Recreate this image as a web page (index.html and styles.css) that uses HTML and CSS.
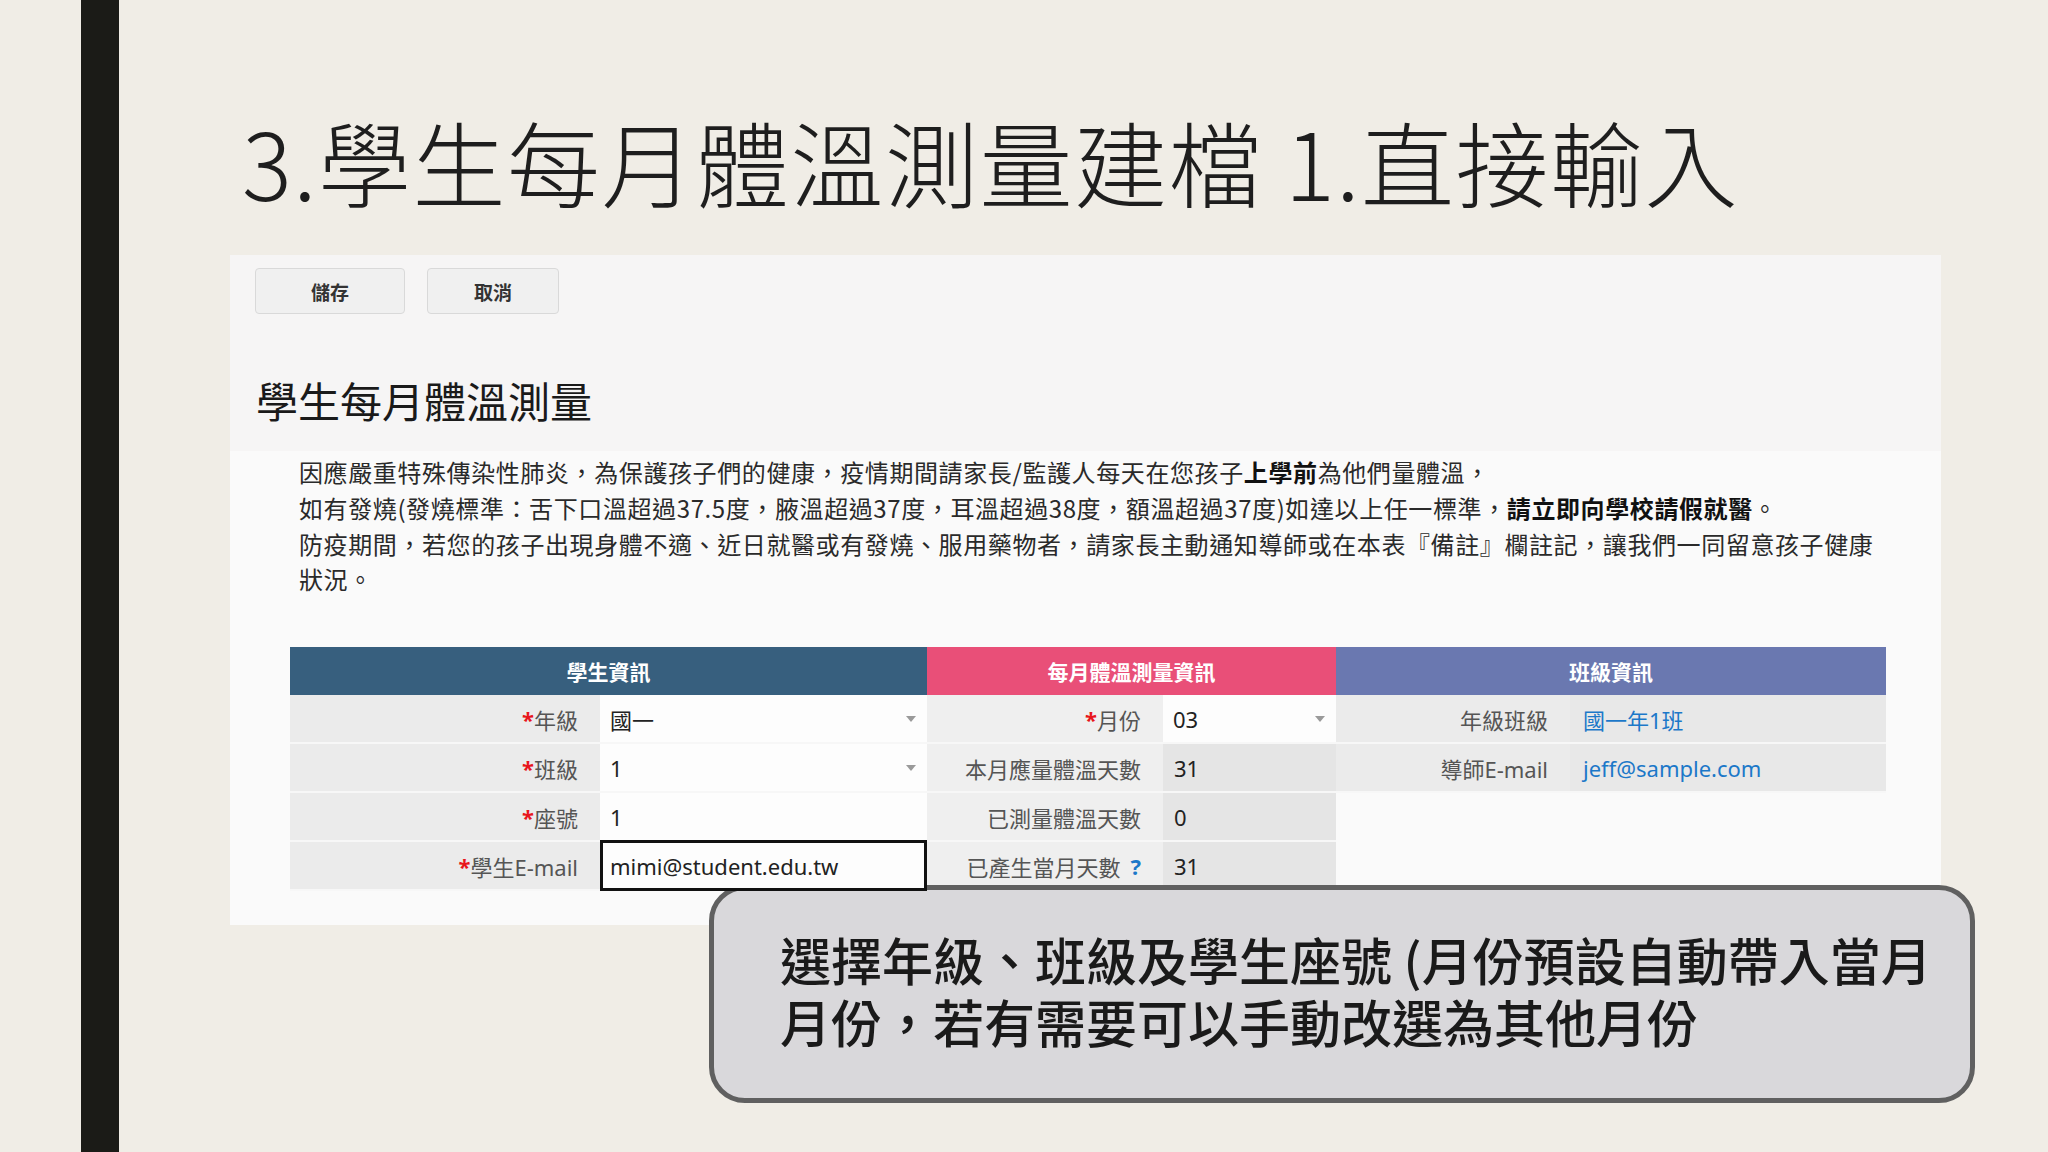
FILE: index.html
```html
<!DOCTYPE html>
<html lang="zh-Hant">
<head>
    <meta charset="UTF-8">
    <meta name="viewport" content="width=device-width, initial-scale=1.0">
    <title>學生每月體溫測量建檔</title>
    <link rel="stylesheet" href="styles.css">
</head>
<body>
    <div class="slide">
        <div class="rail"></div>

        <div class="content">
            <h1 class="slide-title">3.學生每月體溫測量建檔 1.直接輸入</h1>

            <div class="shot">
                <div class="shot-top">
                    <div class="actions">
                        <button class="btn btn-save">儲存</button>
                        <button class="btn btn-cancel">取消</button>
                    </div>
                    <h2 class="form-title">學生每月體溫測量</h2>
                </div>

                <div class="shot-body">
                    <p class="notice">
                        因應嚴重特殊傳染性肺炎，為保護孩子們的健康，疫情期間請家長/監護人每天在您孩子<strong>上學前</strong>為他們量體溫，<br>
                        如有發燒(發燒標準：舌下口溫超過37.5度，腋溫超過37度，耳溫超過38度，額溫超過37度)如達以上任一標準，<strong>請立即向學校請假就醫</strong>。<br>
                        防疫期間，若您的孩子出現身體不適、近日就醫或有發燒、服用藥物者，請家長主動通知導師或在本表『備註』欄註記，讓我們一同留意孩子健康<br>狀況。
                    </p>

                    <div class="grid">
                        <div class="head head-student">學生資訊</div>
                        <div class="head head-month">每月體溫測量資訊</div>
                        <div class="head head-class">班級資訊</div>

                        <!-- row 1 -->
                        <div class="cell label"><span class="req">*</span>年級</div>
                        <div class="cell field select">國一<span class="caret"></span></div>
                        <div class="cell label label-mid"><span class="req">*</span>月份</div>
                        <div class="cell field select">03<span class="caret"></span></div>
                        <div class="cell label">年級班級</div>
                        <div class="cell info"><a href="#">國一年1班</a></div>

                        <!-- row 2 -->
                        <div class="cell label"><span class="req">*</span>班級</div>
                        <div class="cell field select">1<span class="caret"></span></div>
                        <div class="cell label label-mid">本月應量體溫天數</div>
                        <div class="cell value">31</div>
                        <div class="cell label">導師E-mail</div>
                        <div class="cell info"><a href="#">jeff@sample.com</a></div>

                        <!-- row 3 -->
                        <div class="cell label"><span class="req">*</span>座號</div>
                        <div class="cell field">1</div>
                        <div class="cell label label-mid">已測量體溫天數</div>
                        <div class="cell value">0</div>
                        <div class="cell blank"></div>
                        <div class="cell blank"></div>

                        <!-- row 4 -->
                        <div class="cell label"><span class="req">*</span>學生E-mail</div>
                        <div class="cell field focused">mimi@student.edu.tw</div>
                        <div class="cell label label-mid">已產生當月天數<span class="help">?</span></div>
                        <div class="cell value">31</div>
                        <div class="cell blank"></div>
                        <div class="cell blank"></div>
                    </div>
                </div>
            </div>
        </div>

        <div class="callout">
            選擇年級、班級及學生座號 (月份預設自動帶入當月<br>月份，若有需要可以手動改選為其他月份
        </div>
    </div>
</body>
</html>
```

FILE: styles.css
```css
:root {
    --slide-bg: #f0ede6;
    --rail: #1b1b17;
    --head-blue: #375f7e;
    --head-pink: #e94f78;
    --head-purple: #6a78b0;
    --link: #1c78c9;
}

* {
    margin: 0;
    padding: 0;
    box-sizing: border-box;
    font-family: "Noto Sans", "Noto Sans CJK TC", sans-serif;
}

body {
    background-color: var(--slide-bg);
    width: 2048px;
    height: 1152px;
    overflow: hidden;
}

.slide {
    position: relative;
    display: flex;
    width: 2048px;
    height: 1152px;
}

.rail {
    width: 38px;
    height: 100%;
    margin-left: 81px;
    background-color: var(--rail);
}

.content {
    padding: 114px 0 0 111px;
}

.slide-title {
    padding-left: 12px;
    font-family: "Noto Sans CJK TC", sans-serif;
    font-size: 93px;
    font-weight: 300;
    line-height: 93px;
    letter-spacing: 1.5px;
    color: #1e1e1e;
    white-space: nowrap;
}

/* screenshot of the web form */
.shot {
    width: 1711px;
    height: 670px;
    margin-top: 48px;
    background-color: #fafafa;
}

.shot-top {
    padding: 13px 0 28px 25px;
    background-color: #f6f5f5;
}

.actions {
    display: flex;
    gap: 22px;
}

.btn {
    height: 46px;
    border: 1px solid #d9d9d9;
    border-radius: 4px;
    background-color: #f0f0f0;
    color: #333;
    font-family: "Noto Sans CJK TC", sans-serif;
    font-size: 19px;
    font-weight: bold;
}

.btn-save {
    width: 150px;
}

.btn-cancel {
    width: 132px;
}

.form-title {
    margin: 63px 0 0 1px;
    font-family: "Noto Sans CJK TC", sans-serif;
    font-size: 42px;
    font-weight: 400;
    line-height: 46px;
    color: #1a1a1a;
}

.shot-body {
    padding: 3px 0 0 60px;
}

.notice {
    width: 1640px;
    padding-left: 9px;
    font-family: "Noto Sans CJK TC", sans-serif;
    font-size: 24px;
    line-height: 35px;
    letter-spacing: 0.6px;
    color: #2a2a2a;
}

.notice strong {
    color: #111;
    font-weight: bold;
}

/* form grid */
.grid {
    display: grid;
    grid-template-columns: 310px 327px 236px 173px 234px 316px;
    margin-top: 51px;
}

.head {
    grid-column: span 2;
    height: 48px;
    line-height: 48px;
    text-align: center;
    color: #fff;
    font-family: "Noto Sans CJK TC", sans-serif;
    font-size: 21px;
    font-weight: bold;
}

.head-student {
    background-color: var(--head-blue);
}

.head-month {
    background-color: var(--head-pink);
}

.head-class {
    background-color: var(--head-purple);
}

.cell {
    display: flex;
    align-items: center;
    height: 49px;
    border-bottom: 2px solid #f7f7f7;
    font-size: 22px;
    white-space: nowrap;
}

.label {
    justify-content: flex-end;
    padding-right: 22px;
    background-color: #ebebeb;
    color: #555;
}

.label-mid {
    background-color: #efefef;
}

.req {
    color: #e8161b;
    font-weight: bold;
}

.help {
    margin-left: 10px;
    color: var(--link);
    font-weight: bold;
}

.field {
    padding: 0 11px 0 10px;
    background-color: #fdfdfd;
    color: #222;
}

.select {
    justify-content: space-between;
}

.caret {
    width: 0;
    height: 0;
    border-left: 5px solid transparent;
    border-right: 5px solid transparent;
    border-top: 6px solid #9a9a9a;
}

.focused {
    border: 3px solid #111;
    padding-left: 7px;
    height: 51px;
    margin-top: -2px;
    position: relative;
    z-index: 1;
}

.value {
    padding-left: 11px;
    background-color: #e5e5e5;
    color: #222;
}

.info {
    padding-left: 13px;
    background-color: #e8e8e8;
}

.info a {
    color: var(--link);
    text-decoration: none;
}

.blank {
    border-bottom: none;
}

/* annotation bubble */
.callout {
    position: absolute;
    left: 709px;
    top: 885px;
    width: 1266px;
    height: 218px;
    padding: 38px 0 0 66px;
    border: 5px solid #606060;
    border-radius: 36px;
    background-color: #d9d8db;
    font-family: "Noto Sans CJK TC", sans-serif;
    font-size: 51px;
    font-weight: 500;
    line-height: 62px;
    color: #1a1a1a;
    white-space: nowrap;
}
```
